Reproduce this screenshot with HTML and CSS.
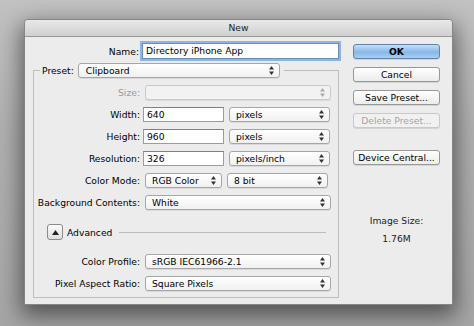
FILE: index.html
```html
<!DOCTYPE html>
<html lang="en">
<head>
    <meta charset="UTF-8">
    <title>New</title>
    <link rel="stylesheet" href="styles.css">
</head>
<body>
    <div class="window">
      <div class="titlebar">New</div>
      <div class="content">
        <div class="main">
          <div class="row name-row">
              <label class="lbl">Name:</label>
              <div class="field focus">Directory iPhone App</div>
          </div>

          <fieldset class="group">
            <legend>
              <span class="legend-lbl">Preset:</span>
              <div class="select preset">Clipboard<svg class="arrows" width="5" height="9" viewBox="0 0 5 9"><path d="M0 3.5L2.5 0L5 3.5Z M0 5.5L2.5 9L5 5.5Z"/></svg></div>
            </legend>

            <div class="row">
                <span class="lbl dim">Size:</span>
                <div class="select wide disabled"><svg class="arrows" width="5" height="9" viewBox="0 0 5 9"><path d="M0 3.5L2.5 0L5 3.5Z M0 5.5L2.5 9L5 5.5Z"/></svg></div>
            </div>

            <div class="row">
                <span class="lbl">Width:</span>
                <div class="field short">640</div>
                <div class="select unit">pixels<svg class="arrows" width="5" height="9" viewBox="0 0 5 9"><path d="M0 3.5L2.5 0L5 3.5Z M0 5.5L2.5 9L5 5.5Z"/></svg></div>
            </div>

            <div class="row">
                <span class="lbl">Height:</span>
                <div class="field short">960</div>
                <div class="select unit">pixels<svg class="arrows" width="5" height="9" viewBox="0 0 5 9"><path d="M0 3.5L2.5 0L5 3.5Z M0 5.5L2.5 9L5 5.5Z"/></svg></div>
            </div>

            <div class="row">
                <span class="lbl">Resolution:</span>
                <div class="field short">326</div>
                <div class="select unit">pixels/inch<svg class="arrows" width="5" height="9" viewBox="0 0 5 9"><path d="M0 3.5L2.5 0L5 3.5Z M0 5.5L2.5 9L5 5.5Z"/></svg></div>
            </div>

            <div class="row">
                <span class="lbl">Color Mode:</span>
                <div class="select mode">RGB Color<svg class="arrows" width="5" height="9" viewBox="0 0 5 9"><path d="M0 3.5L2.5 0L5 3.5Z M0 5.5L2.5 9L5 5.5Z"/></svg></div>
                <div class="select unit">8 bit<svg class="arrows" width="5" height="9" viewBox="0 0 5 9"><path d="M0 3.5L2.5 0L5 3.5Z M0 5.5L2.5 9L5 5.5Z"/></svg></div>
            </div>

            <div class="row">
                <span class="lbl">Background Contents:</span>
                <div class="select wide">White<svg class="arrows" width="5" height="9" viewBox="0 0 5 9"><path d="M0 3.5L2.5 0L5 3.5Z M0 5.5L2.5 9L5 5.5Z"/></svg></div>
            </div>

            <div class="advanced">
                <span class="disclosure"><svg width="7" height="5" viewBox="0 0 7 5"><path d="M0 5L3.5 0L7 5Z"/></svg></span>
                <span>Advanced</span>
                <span class="rule"></span>
            </div>

            <div class="row">
                <span class="lbl">Color Profile:</span>
                <div class="select wide">sRGB IEC61966-2.1<svg class="arrows" width="5" height="9" viewBox="0 0 5 9"><path d="M0 3.5L2.5 0L5 3.5Z M0 5.5L2.5 9L5 5.5Z"/></svg></div>
            </div>

            <div class="row">
                <span class="lbl">Pixel Aspect Ratio:</span>
                <div class="select wide">Square Pixels<svg class="arrows" width="5" height="9" viewBox="0 0 5 9"><path d="M0 3.5L2.5 0L5 3.5Z M0 5.5L2.5 9L5 5.5Z"/></svg></div>
            </div>
          </fieldset>
        </div>

        <div class="side">
          <button class="btn default">OK</button>
          <button class="btn">Cancel</button>
          <button class="btn">Save Preset...</button>
          <button class="btn" disabled>Delete Preset...</button>
          <button class="btn central">Device Central...</button>
          <div class="image-size">
            <p>Image Size:</p>
            <p>1.76M</p>
          </div>
        </div>
      </div>
    </div>
</body>
</html>
```

FILE: styles.css
```css
body {
    margin: 0;
    width: 474px;
    height: 326px;
    overflow: hidden;
    padding: 19px 0 0 24px;
    box-sizing: border-box;
    background: linear-gradient(#c2c2c2, #b0b0b0 40%, #a6a6a6);
    font-family: "DejaVu Sans", sans-serif;
    font-size: 9.2px;
    color: #000;
}
.window {
    width: 429px;
    height: 286px;
    background: #ececec;
    border: 1px solid #868686;
    box-sizing: border-box;
    border-radius: 4px 4px 0 0;
    box-shadow: 0 8px 22px 3px rgba(0, 0, 0, 0.5);
}
.titlebar {
    height: 16px;
    line-height: 16px;
    text-align: center;
    background: linear-gradient(#e8e8e8, #d0d0d0);
    border-bottom: 1px solid #989898;
    border-radius: 4px 4px 0 0;
    color: #222;
}
.content {
    display: flex;
    padding: 6px 0 0 7px;
}
.main {
    width: 307px;
}
.row {
    display: flex;
    align-items: center;
    height: 15px;
    margin-top: 7px;
}
.name-row {
    height: 16px;
    margin-top: 0;
}
.lbl {
    width: 106px;
    text-align: right;
    margin-right: 3px;
    flex-shrink: 0;
}
.name-row .lbl {
    width: 107px;
}
.dim {
    color: #9a9a9a;
}
.field {
    height: 100%;
    box-sizing: border-box;
    background: #fff;
    border: 1px solid #9c9c9c;
    border-top-color: #7f7f7f;
    padding-left: 3px;
    line-height: 13px;
}
.name-row .field {
    width: 197px;
    line-height: 14px;
}
.focus {
    outline: 2px solid #8fb6e3;
    outline-offset: 0;
    border-color: #6b8fbc;
}
.field.short {
    width: 81px;
}
.select {
    position: relative;
    height: 15px;
    box-sizing: border-box;
    border: 1px solid #a6a6a6;
    border-radius: 3px;
    background: linear-gradient(#ffffff, #f1f1f1);
    padding-left: 6px;
    line-height: 13px;
    margin-left: 2px;
    box-shadow: 0 1px 0 rgba(0, 0, 0, 0.08);
}
.select .arrows {
    position: absolute;
    right: 5px;
    top: 2px;
    fill: #333;
}
.select.disabled {
    background: #f2f2f2;
    border-color: #c9c9c9;
}
.select.disabled .arrows {
    fill: #aaa;
}
.select.wide {
    width: 186px;
}
.select.unit {
    width: 101px;
    margin-left: 5px;
}
.select.mode {
    width: 77px;
}
.group {
    margin: 4px 0 0 1px;
    padding: 0 0 7px 0;
    width: 306px;
    height: 235px;
    box-sizing: border-box;
    border: 1px solid #bdbdbd;
}
.group legend {
    display: flex;
    align-items: center;
    margin-left: 6px;
    padding: 0 4px 0 2px;
    height: 15px;
}
.legend-lbl {
    margin-right: 4px;
}
.select.preset {
    width: 202px;
    margin-left: 0;
    padding-left: 7px;
}
.advanced {
    display: flex;
    align-items: center;
    height: 16px;
    margin: 14px 0 0 13px;
}
.disclosure {
    width: 16px;
    height: 16px;
    box-sizing: border-box;
    border: 1px solid #8a8a8a;
    border-radius: 3px;
    background: linear-gradient(#fbfbfb, #dedede);
    display: flex;
    align-items: center;
    justify-content: center;
    margin-right: 4px;
    fill: #222;
}
.rule {
    flex: 1;
    height: 1px;
    background: #bdbdbd;
    margin: 0 12px 0 7px;
}
.advanced + .row {
    margin-top: 14px;
}
.side {
    width: 87px;
    margin-left: 14px;
    display: flex;
    flex-direction: column;
}
.btn {
    all: unset;
    height: 15px;
    box-sizing: border-box;
    border: 1px solid #989898;
    border-radius: 3px;
    background: linear-gradient(#ffffff, #ececec);
    text-align: center;
    line-height: 13px;
    margin-bottom: 8px;
    font-family: "DejaVu Sans", sans-serif;
    font-size: 9.2px;
    color: #000;
    box-shadow: 0 1px 0 rgba(0, 0, 0, 0.1);
}
.btn.default {
    margin-top: 1px;
    background: linear-gradient(#c6def6, #86b8e8 55%, #a9cef0);
    border-color: #5d82ac;
    font-weight: bold;
}
.btn:disabled {
    color: #a5a5a5;
    border-color: #c9c9c9;
    background: #f1f1f1;
}
.btn.central {
    margin-top: 14px;
}
.image-size {
    text-align: center;
    margin-top: 42px;
    color: #222;
}
.image-size p {
    margin: 0 0 7px 0;
}
```
